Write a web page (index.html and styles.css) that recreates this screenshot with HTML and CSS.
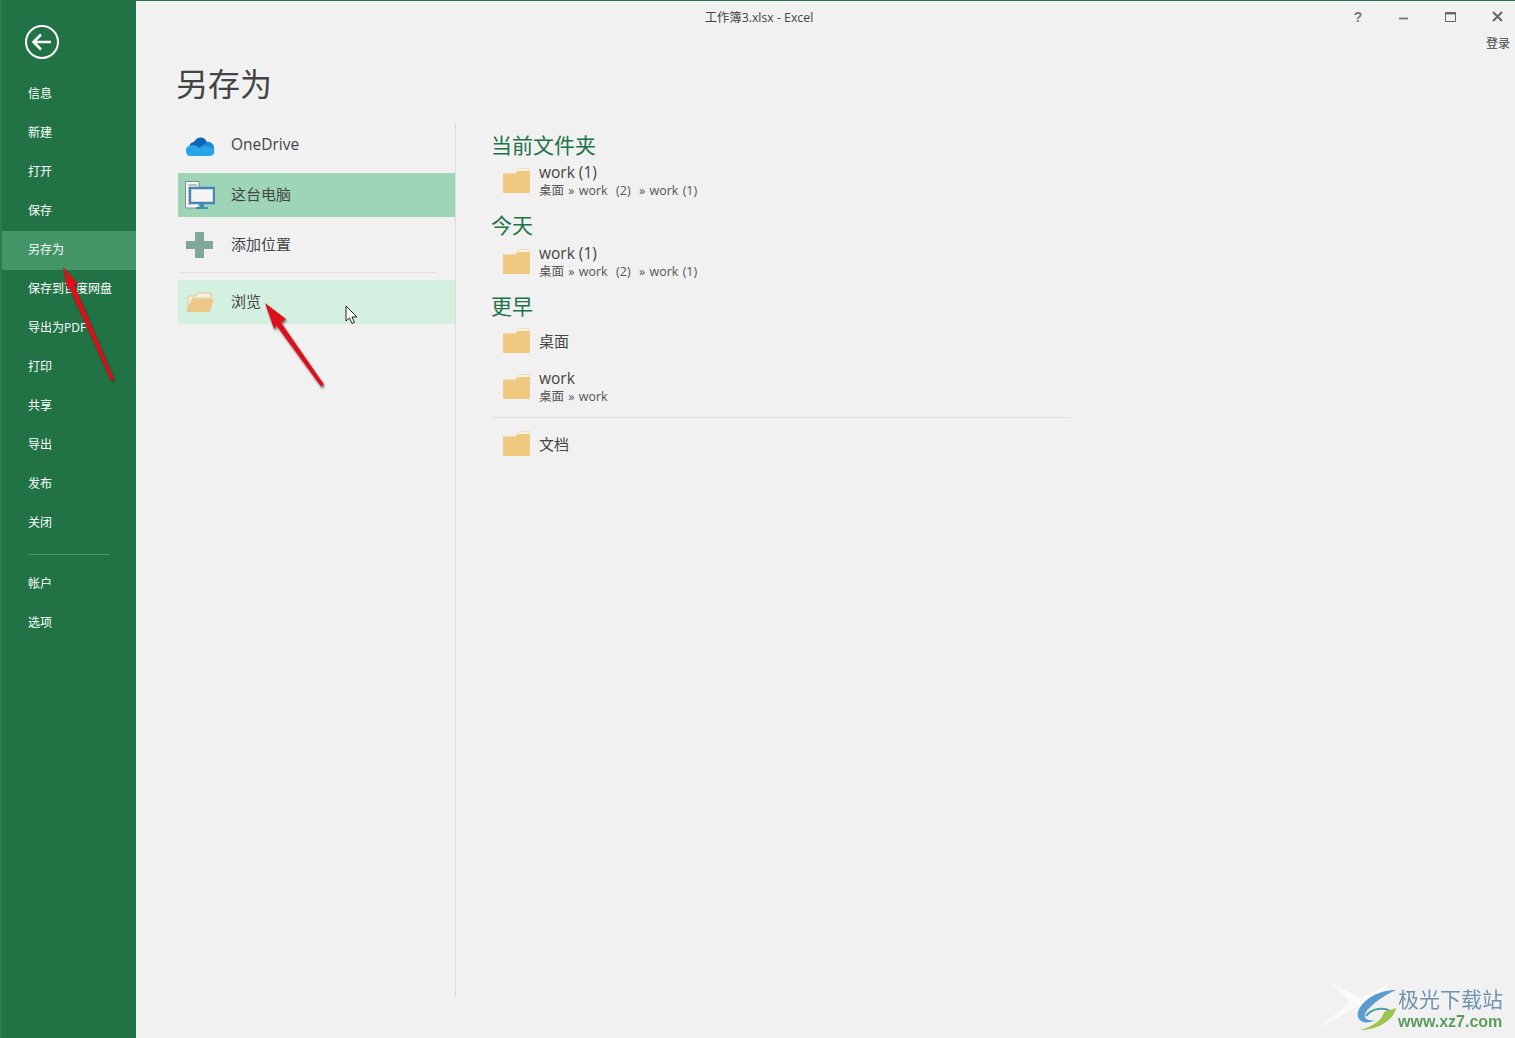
FILE: index.html
```html
<!DOCTYPE html>
<html>
<head>
    <title>另存为 - Excel</title>
    <link rel="stylesheet" href="styles.css">
</head>
<body>
    <aside class="sidebar">
        <div class="back">
            <svg width="36" height="36" viewBox="0 0 36 36">
                <circle cx="18" cy="18" r="16" fill="none" stroke="#fff" stroke-width="2"/>
                <path d="M9.500 18H27M17 10.500L9.500 18L17 25.500" fill="none" stroke="#fff" stroke-width="2.600"/>
            </svg>
        </div>
        <div class="nav-item">信息</div>
        <div class="nav-item">新建</div>
        <div class="nav-item">打开</div>
        <div class="nav-item">保存</div>
        <div class="nav-item active">另存为</div>
        <div class="nav-item">保存到百度网盘</div>
        <div class="nav-item">导出为PDF</div>
        <div class="nav-item">打印</div>
        <div class="nav-item">共享</div>
        <div class="nav-item">导出</div>
        <div class="nav-item">发布</div>
        <div class="nav-item">关闭</div>
        <div class="nav-sep"></div>
        <div class="nav-item">帐户</div>
        <div class="nav-item">选项</div>
    </aside>

    <main class="content">
        <div class="titlebar">
            <div class="doc-name">工作簿3.xlsx - Excel</div>
            <div class="win-buttons">
                <span class="win-btn help">?</span>
                <span class="win-btn">
                    <svg width="10" height="10" viewBox="0 0 10 10"><path d="M0 6.500H9" stroke="#777" stroke-width="1.800"/></svg>
                </span>
                <span class="win-btn">
                    <svg width="11" height="11" viewBox="0 0 11 11"><path d="M.5 1.500H10.500V10.500H.5Z" fill="none" stroke="#666"/><path d="M.5 2.200H10.500" stroke="#666" stroke-width="2.400"/></svg>
                </span>
                <span class="win-btn">
                    <svg width="11" height="11" viewBox="0 0 11 11"><path d="M1 1L10 10M10 1L1 10" stroke="#666" stroke-width="2"/></svg>
                </span>
            </div>
        </div>
        <div class="login">登录</div>

        <h1 class="page-title">另存为</h1>

        <div class="columns">
            <section class="places">
                <div class="place">
                    <svg class="place-icon" width="30" height="24" viewBox="0 0 30 24">
                        <path d="M5 17C3 12 6 9 9 9C11 4 19 2 22 9L24 12L14 20Z" fill="#0f64b8"/>
                        <path d="M22 9C26 8 30 12 29 17L14 14Z" fill="#1a8ad8"/>
                        <path d="M1 17C1 14 4 12 8 12C11 12 13 14 15 15C18 13 24 12 29 17C30 20 28 23 25 23H5C2 23 1 20 1 17Z" fill="#29a4e8"/>
                    </svg>
                    <span class="latin">OneDrive</span>
                </div>
                <div class="place selected">
                    <svg class="place-icon" width="30" height="28" viewBox="0 0 30 28">
                        <path d="M.5 .5H14V27H.5Z" fill="#f7f7f7" stroke="#7d8f88"/>
                        <path d="M3 4H12M3 7H12M3 10H5M3 13H5M3 16H5M3 19H5M3 23H5" stroke="#7d8f88" stroke-width="1.200"/>
                        <path d="M5 7H29V22H5Z" fill="#f5f5f5" stroke="#4a86b4" stroke-width="2.400"/>
                        <path d="M15 23H19V26H23V28H11V26H15Z" fill="#3f8fb0"/>
                    </svg>
                    <span>这台电脑</span>
                </div>
                <div class="place">
                    <svg class="place-icon" width="30" height="28" viewBox="0 0 30 28">
                        <path d="M10 1H19V10H28V18H19V27H10V18H1V10H10Z" fill="#7fa898"/>
                    </svg>
                    <span>添加位置</span>
                </div>
                <div class="place-sep"></div>
                <div class="place hover">
                    <svg class="place-icon" width="30" height="24" viewBox="0 0 30 24">
                        <path d="M3 18V6H11L13 3H26V8H8Z" fill="#f7efe0" stroke="#e4c48f"/>
                        <path d="M7 9H29L25 22H1Z" fill="#eec688"/>
                    </svg>
                    <span>浏览</span>
                </div>
            </section>

            <section class="recent">
                <h2 class="first">当前文件夹</h2>
                <div class="folder">
                    <svg class="folder-icon" viewBox="0 0 27 25"><use href="#folder"/></svg>
                    <div>
                        <div class="folder-name">work (1)</div>
                        <div class="folder-path">桌面 » work  (2)  » work (1)</div>
                    </div>
                </div>

                <h2>今天</h2>
                <div class="folder">
                    <svg class="folder-icon" viewBox="0 0 27 25"><use href="#folder"/></svg>
                    <div>
                        <div class="folder-name">work (1)</div>
                        <div class="folder-path">桌面 » work  (2)  » work (1)</div>
                    </div>
                </div>

                <h2>更早</h2>
                <div class="folder single">
                    <svg class="folder-icon" viewBox="0 0 27 25"><use href="#folder"/></svg>
                    <div class="folder-cn">桌面</div>
                </div>
                <div class="folder">
                    <svg class="folder-icon" viewBox="0 0 27 25"><use href="#folder"/></svg>
                    <div>
                        <div class="folder-name">work</div>
                        <div class="folder-path">桌面 » work</div>
                    </div>
                </div>
                <div class="recent-sep"></div>
                <div class="folder single">
                    <svg class="folder-icon" viewBox="0 0 27 25"><use href="#folder"/></svg>
                    <div class="folder-cn">文档</div>
                </div>
            </section>
        </div>
    </main>

    <!-- shared folder shape -->
    <svg class="defs" width="0" height="0">
        <defs>
            <g id="folder">
                <path d="M14 3L17 0.5H26Q27 0.5 27 2V5H14Z" fill="#fbf4e4" stroke="#e8cf9f" stroke-width=".6"/>
                <path d="M0 5.500H12L15.500 3H27V24Q27 25 26 25H1Q0 25 0 24Z" fill="#eec97f"/>
            </g>
        </defs>
    </svg>

    <!-- red arrows drawn on the screenshot -->
    <svg class="arrows" width="1515" height="1038" viewBox="0 0 1515 1038">
        <path d="M63 267L78 284L74.500 285.500L114 379L111 380.500L69.500 288L67.500 289Z" fill="#dd0f1a"/>
        <path d="M265 303L286 319L281 322.500L324 384.500L321 386.500L276.500 325.500L274 329Z" fill="#dd0f1a"/>
    </svg>

    <svg class="cursor" width="14" height="20" viewBox="0 0 14 20">
        <path d="M1 1V16L4.500 13L7 18.500L9.500 17.500L7 12H12Z" fill="#fff" stroke="#222" stroke-width="1"/>
    </svg>

    <div class="watermark">
        <svg class="wm-logo" width="90" height="56" viewBox="0 0 90 56">
            <path d="M0 52L34 24L14 4L44 20L74 6L50 28L38 30Z" fill="#fafafa"/>
            <path d="M80 12C62 12 46 22 42 34C40 42 48 48 60 42C52 44 46 40 50 34C54 28 66 18 80 12Z" fill="#5a9bd0"/>
            <path d="M50 38C56 30 68 29 74 33" fill="none" stroke="#4aa0b0" stroke-width="2"/>
            <path d="M80 30C78 42 62 52 44 52C58 48 66 42 68 34Z" fill="#9cc34a"/>
        </svg>
        <div class="wm-text">
            <div class="wm-cn">极光下载站</div>
            <div class="wm-url">www.xz7.com</div>
        </div>
    </div>
</body>
</html>
```

FILE: styles.css
```css
html, body {
    margin: 0;
    height: 100%;
}
body {
    display: flex;
    width: 1515px;
    height: 1038px;
    overflow: hidden;
    position: relative;
    background: #f1f1f1;
    color: #444;
    font-family: "Open Sans", "Noto Sans CJK SC", sans-serif;
}

/* left green bar */
.sidebar {
    width: 134px;
    flex: none;
    background: #217346;
    border-left: 2px solid #2c7a50;
    color: #fff;
    font-size: 12px;
}
.back {
    height: 75px;
    box-sizing: border-box;
    padding: 24px 0 0 22px;
}
.back svg { display: block; }
.nav-item {
    height: 39px;
    line-height: 37px;
    padding-left: 26px;
    white-space: nowrap;
}
.nav-item.active { background: #439467; }
.nav-sep {
    height: 1px;
    width: 82px;
    margin: 11px 0 10px 26px;
    background: #4f9470;
}

.content {
    flex: 1;
    position: relative;
    border-top: 1px solid #217346;
}
.titlebar {
    height: 32px;
    display: flex;
    position: relative;
}
.doc-name {
    width: 1246px;
    text-align: center;
    font-size: 12.300px;
    line-height: 33px;
    color: #444;
}
.win-buttons {
    position: absolute;
    top: 0;
    left: 1199px;
    display: flex;
}
.win-btn {
    width: 46.300px;
    height: 31px;
    display: flex;
    align-items: center;
    justify-content: center;
    color: #777;
}
.win-btn.help {
    font: bold 14px "Liberation Sans", sans-serif;
}
.login {
    position: absolute;
    top: 34px;
    right: 5px;
    font-size: 12px;
    line-height: 17px;
}
.page-title {
    margin: 29px 0 0 40px;
    height: 44px;
    font-size: 32px;
    line-height: 44px;
    font-weight: 400;
    color: #444;
}
.columns {
    display: flex;
    margin: 17px 0 0 42px;
}

/* places list */
.places {
    width: 277px;
    height: 874px;
    border-right: 1px solid #dcdcdc;
}
.place {
    height: 44px;
    margin-bottom: 6px;
    display: flex;
    align-items: center;
    font-size: 15px;
}
.place span { padding-bottom: 3px; }
.place .latin { font-size: 15.500px; }
.place-icon {
    width: 30px;
    flex: none;
    margin: 0 16px 0 7px;
}
.place.selected { background: #9fd5b7; }
.place.hover {
    background: #d3f0e0;
    margin-top: 7px;
}
.place-sep {
    height: 1px;
    width: 257px;
    margin-top: -1px;
    background: #dedede;
}

/* recent folders */
.recent {
    width: 580px;
    margin: 8px 0 0 35px;
}
.recent h2 {
    margin: 0;
    height: 28px;
    font-size: 21px;
    line-height: 28px;
    font-weight: 400;
    color: #217346;
}
.recent h2.first { margin-bottom: -1px; }
.folder {
    display: flex;
    align-items: center;
    height: 40px;
    margin: 2px 0 11px 12px;
}
.folder.single {
    height: 38px;
    margin-top: 1px;
    margin-bottom: 7px;
}
.folder-icon {
    width: 27px;
    height: 25px;
    flex: none;
    margin-right: 9px;
}
.folder-name {
    font-size: 15.500px;
    line-height: 20px;
}
.folder-path {
    font-size: 12.500px;
    line-height: 17px;
    word-spacing: 1px;
    color: #555;
    white-space: pre;
}
.folder-cn { font-size: 15px; }
.recent-sep {
    height: 1px;
    background: #dedede;
    margin: 0 0 6px 0;
}

.defs { position: absolute; }
.arrows {
    position: absolute;
    left: 0;
    top: 0;
    filter: drop-shadow(1px 2px 1px rgba(50, 30, 30, .6));
}
.cursor {
    position: absolute;
    left: 345px;
    top: 305px;
}

/* site stamp, bottom right */
.watermark {
    position: absolute;
    left: 1316px;
    top: 976px;
    display: flex;
    filter: blur(.4px);
}
.wm-logo { margin-top: 2px; }
.wm-text {
    position: absolute;
    left: 82px;
    top: 10px;
    white-space: nowrap;
}
.wm-cn {
    font-size: 21px;
    line-height: 27px;
    color: #6f93b0;
}
.wm-url {
    font: bold 16px/17px "Liberation Sans", sans-serif;
    color: #5a9c5e;
}
```
